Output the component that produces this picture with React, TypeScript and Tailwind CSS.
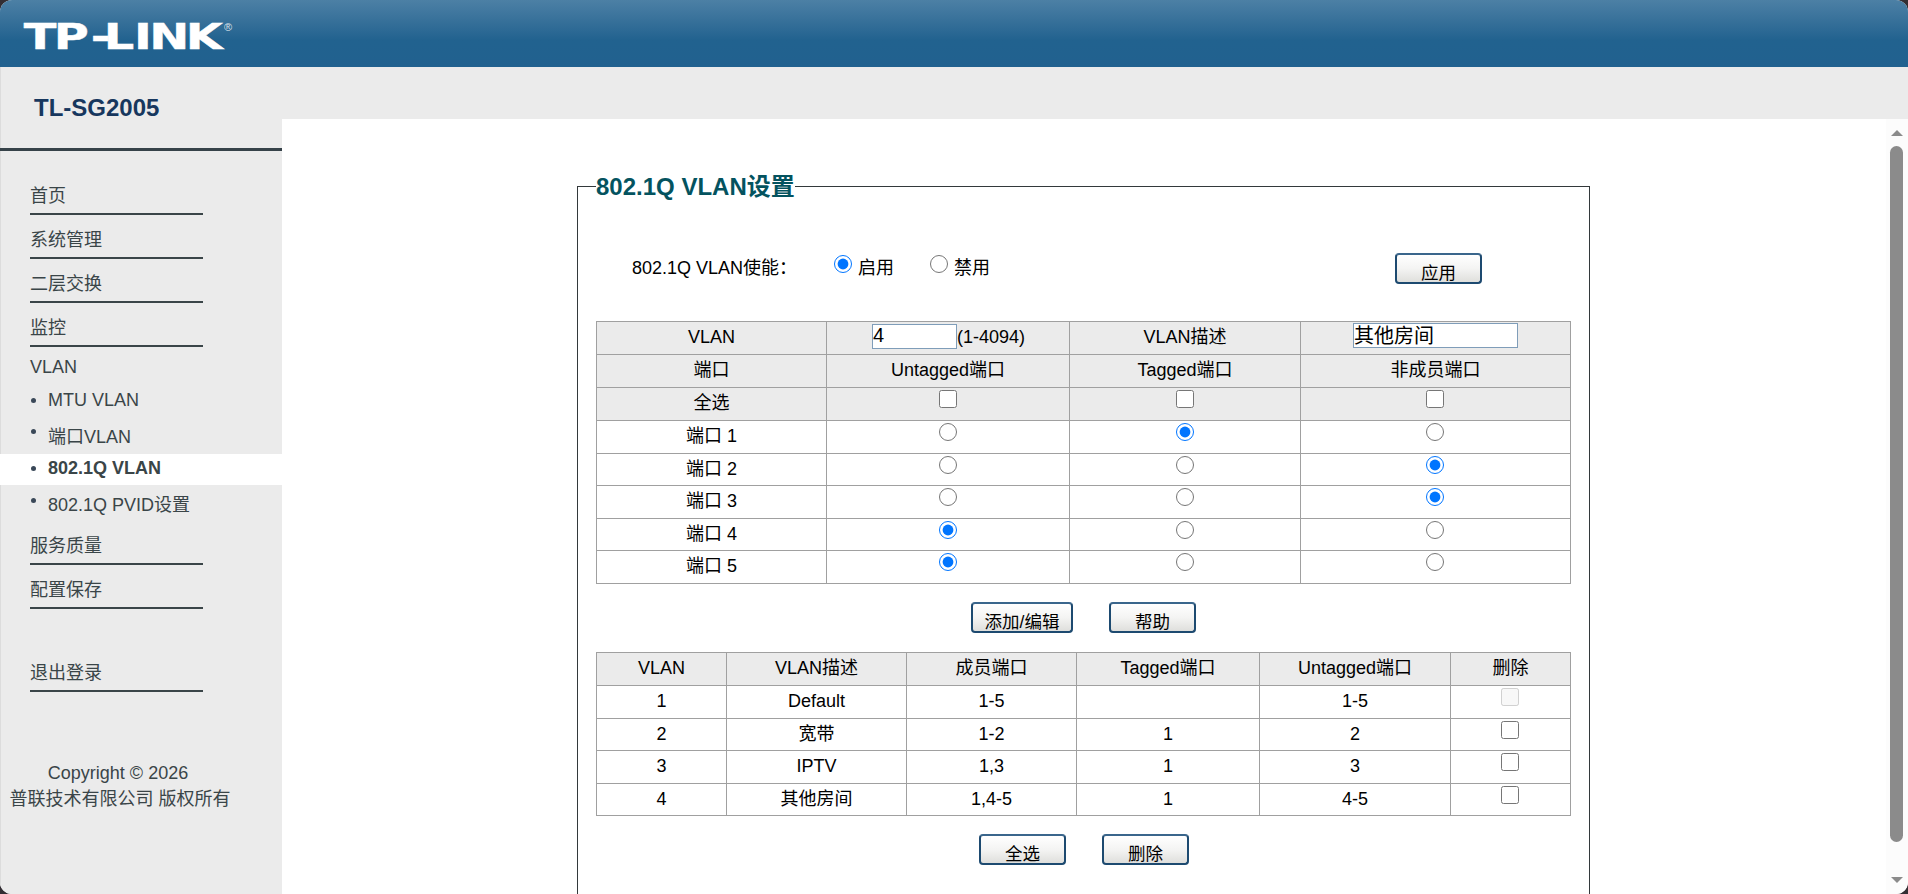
import type { ReactNode } from "react"
import clsx from "clsx"

type Member = "untagged" | "tagged" | "none"

const members: Member[] = ["untagged", "tagged", "none"]

// row heights alternate because the rows are 32.6px high on a scaled display
const ports: { id: number; member: Member; height: string }[] = [
  { id: 1, member: "tagged", height: "h-[33px]" },
  { id: 2, member: "none", height: "h-[32px]" },
  { id: 3, member: "none", height: "h-[33px]" },
  { id: 4, member: "untagged", height: "h-[32px]" },
  { id: 5, member: "untagged", height: "h-[33px]" }
]

const vlans = [
  { id: 1, name: "Default", all: "1-5", tagged: "", untagged: "1-5", height: "h-[33px]" },
  { id: 2, name: "宽带", all: "1-2", tagged: "1", untagged: "2", height: "h-[32px]" },
  { id: 3, name: "IPTV", all: "1,3", tagged: "1", untagged: "3", height: "h-[33px]" },
  { id: 4, name: "其他房间", all: "1,4-5", tagged: "1", untagged: "4-5", height: "h-[32px]" }
]

function Logo() {
  return (
    <svg width="240" height="67" viewBox="0 0 240 67" fill="#fff" aria-label="TP-LINK">
      <text
        transform="translate(23 49.2) scale(1.33 1)"
        x="0.5 23.2 51 60.7 83.5 95 122.3"
        fontFamily="'DejaVu Sans'"
        fontWeight="700"
        fontSize="36"
        stroke="#fff"
        strokeWidth="0.4"
      >
        TP-LINK
      </text>
      <text x="224" y="31" fontFamily="'Liberation Sans'" fontSize="11" opacity="0.8">
        ®
      </text>
    </svg>
  )
}

function NavItem({ children, className }: { children: ReactNode; className?: string }) {
  return (
    <li
      className={clsx(
        "ml-[30px] flex h-[44px] w-[173px] items-end border-b-2 border-[#3a4548] pb-[3px] leading-7",
        className
      )}
    >
      {children}
    </li>
  )
}

type subItemProps = {
  children: ReactNode
  className: string
  dot?: string
}

function SubItem({ children, className, dot }: subItemProps) {
  return (
    <li className={clsx("flex items-center pl-[31px]", className)}>
      <span className={clsx("size-[5px] rounded-full bg-[#3a4858]", dot)} />
      <span className="ml-3 leading-6">{children}</span>
    </li>
  )
}

function Button({ children, wide }: { children: ReactNode; wide?: boolean }) {
  return (
    <button
      className={clsx(
        "h-[31px] rounded-[4px] border-2 border-[#1d4a70] border-t-[#3a668c] bg-linear-to-b from-white via-[#f4f4f3] to-[#dfdfdc] pt-[8px] text-[17.5px] leading-[20px]",
        wide ? "w-[102px]" : "w-[87px]"
      )}
    >
      {children}
    </button>
  )
}

function Cell({ children, top }: { children?: ReactNode; top?: boolean }) {
  return (
    <td
      className={clsx(
        "border border-[#a0a0a0] p-0 text-center leading-[24px]",
        top ? "pt-[2px] align-top last:pr-[2px]" : "pb-[2px]"
      )}
    >
      {children}
    </td>
  )
}

function Sidebar() {
  return (
    <aside className="h-[827px] w-[282px] shrink-0 border-l border-[#dcdcdc] bg-[#ebebeb] text-[18px] text-[#3a4548]">
      <div className="-ml-px flex h-[84px] items-center border-b-3 border-[#364249] pl-[34px]">
        <h2 className="text-[24px] font-bold text-[#17375e]">TL-SG2005</h2>
      </div>
      <ul className="-ml-px pt-[20px]">
        <NavItem>首页</NavItem>
        <NavItem>系统管理</NavItem>
        <NavItem>二层交换</NavItem>
        <NavItem>监控</NavItem>
        <li className="ml-[30px] h-[36px] pt-[8px] leading-6">VLAN</li>
        <SubItem className="h-[36px] pb-[2px]">MTU VLAN</SubItem>
        <SubItem className="h-[35px]" dot="mb-[10px]">
          端口VLAN
        </SubItem>
        <SubItem className="h-[31px] bg-white pb-[3px] font-bold">802.1Q VLAN</SubItem>
        <SubItem className="h-[38px] pt-[2px]" dot="mb-[10px]">
          802.1Q PVID设置
        </SubItem>
        <NavItem className="-mt-[2px]">服务质量</NavItem>
        <NavItem>配置保存</NavItem>
        <NavItem className="mt-[39px]">退出登录</NavItem>
      </ul>
      <p className="mt-[68px] w-[234px] text-center leading-[26px]">
        Copyright © 2026
        <br />
        <span className="pl-[4px]">普联技术有限公司 版权所有</span>
      </p>
    </aside>
  )
}

function PortTable() {
  return (
    <table className="w-[975px] table-fixed border-collapse">
      <colgroup>
        <col className="w-[230px]" />
        <col className="w-[243px]" />
        <col className="w-[231px]" />
        <col className="w-[270px]" />
      </colgroup>
      <tbody>
        <tr className="h-[33px] bg-[#ebebeb]">
          <Cell>VLAN</Cell>
          <Cell>
            <div className="flex h-[25px] items-center justify-center pl-px">
              <input
                className="mb-[2px] h-[25px] w-[85px] border border-[#7f9db9] bg-white pb-px text-[20px]"
                defaultValue="4"
              />
              <span>(1-4094)</span>
            </div>
          </Cell>
          <Cell>VLAN描述</Cell>
          <Cell>
            <input
              className="mx-auto mb-[4px] block h-[25px] w-[165px] border border-[#7f9db9] bg-white pb-px text-[20px]"
              defaultValue="其他房间"
            />
          </Cell>
        </tr>
        <tr className="h-[33px] bg-[#ebebeb]">
          <Cell>端口</Cell>
          <Cell>Untagged端口</Cell>
          <Cell>Tagged端口</Cell>
          <Cell>非成员端口</Cell>
        </tr>
        <tr className="h-[33px] bg-[#ebebeb]">
          <Cell>全选</Cell>
          {members.map((m) => (
            <Cell key={m} top>
              <input type="checkbox" className="mx-auto block size-[18px]" />
            </Cell>
          ))}
        </tr>
        {ports.map((port) => (
          <tr key={port.id} className={port.height}>
            <Cell>端口 {port.id}</Cell>
            {members.map((m) => (
              <Cell key={m} top>
                <input
                  type="radio"
                  name={`port${port.id}`}
                  className="mx-auto block size-[18px]"
                  defaultChecked={port.member === m}
                />
              </Cell>
            ))}
          </tr>
        ))}
      </tbody>
    </table>
  )
}

function VlanTable() {
  return (
    <table className="w-[975px] table-fixed border-collapse">
      <colgroup>
        <col className="w-[130px]" />
        <col className="w-[180px]" />
        <col className="w-[170px]" />
        <col className="w-[183px]" />
        <col className="w-[191px]" />
        <col className="w-[120px]" />
      </colgroup>
      <tbody>
        <tr className="h-[33px] bg-[#ebebeb]">
          <Cell>VLAN</Cell>
          <Cell>VLAN描述</Cell>
          <Cell>成员端口</Cell>
          <Cell>Tagged端口</Cell>
          <Cell>Untagged端口</Cell>
          <Cell>删除</Cell>
        </tr>
        {vlans.map((vlan) => (
          <tr key={vlan.id} className={vlan.height}>
            <Cell>{vlan.id}</Cell>
            <Cell>{vlan.name}</Cell>
            <Cell>{vlan.all}</Cell>
            <Cell>{vlan.tagged}</Cell>
            <Cell>{vlan.untagged}</Cell>
            <Cell top>
              {/* the default VLAN can't be deleted */}
              <input
                type="checkbox"
                className="mx-auto block size-[18px]"
                disabled={vlan.id === 1}
              />
            </Cell>
          </tr>
        ))}
      </tbody>
    </table>
  )
}

export default function App() {
  return (
    <div className="h-[894px] w-[1908px] overflow-hidden bg-[#332e33]">
      <div className="h-full overflow-hidden rounded-xl bg-white font-['Liberation_Sans','Noto_Sans_CJK_SC',sans-serif] text-[18px] text-black">
        <header className="h-[67px] bg-linear-to-b from-[#4c80a5] via-[#21628f] via-60% to-[#21618f]">
          <Logo />
        </header>
        <div className="flex">
          <Sidebar />
          <div className="flex-1">
            <div className="h-[52px] bg-[#ebebeb]" />
            <div className="flex h-[775px]">
              <main className="flex-1 overflow-hidden pl-[295px]">
                <fieldset className="mt-[49px] h-[800px] w-[1013px] border border-[#33393b] px-[18px]">
                  <legend className="text-[24px] leading-[37px] font-bold text-[#04535f]">
                    802.1Q VLAN设置
                  </legend>
                  <div className="flex pt-[50px] pl-[36px]">
                    <span className="mt-px w-[202px] leading-[24px]">802.1Q VLAN使能：</span>
                    <label className="flex w-[96px] gap-[6px] leading-[24px]">
                      <input type="radio" name="enable" className="size-[18px]" defaultChecked />
                      <span className="mt-px">启用</span>
                    </label>
                    <label className="flex gap-[6px] leading-[24px]">
                      <input type="radio" name="enable" className="size-[18px]" />
                      <span className="mt-px">禁用</span>
                    </label>
                    <div className="-mt-[2px] ml-[405px]">
                      <Button>应用</Button>
                    </div>
                  </div>
                  <div className="mt-[34px]">
                    <PortTable />
                  </div>
                  <div className="mt-[18px] flex gap-[36px] pl-[375px]">
                    <Button wide>添加/编辑</Button>
                    <Button>帮助</Button>
                  </div>
                  <div className="mt-[19px]">
                    <VlanTable />
                  </div>
                  <div className="mt-[18px] flex gap-[36px] pl-[383px]">
                    <Button>全选</Button>
                    <Button>删除</Button>
                  </div>
                </fieldset>
              </main>
              <div className="flex w-[22px] flex-col items-center bg-[#fcfcfc] pt-[11px] pr-px">
                <svg width="12" height="6" fill="#8b8b8b">
                  <path d="M6 0 L12 6 H0 Z" />
                </svg>
                <div className="mt-[10px] h-[696px] w-[13px] rounded-full bg-[#8b8b8b]" />
                <svg className="mt-[35px]" width="12" height="6" fill="#8b8b8b">
                  <path d="M6 6 L12 0 H0 Z" />
                </svg>
              </div>
            </div>
          </div>
        </div>
      </div>
    </div>
  )
}
